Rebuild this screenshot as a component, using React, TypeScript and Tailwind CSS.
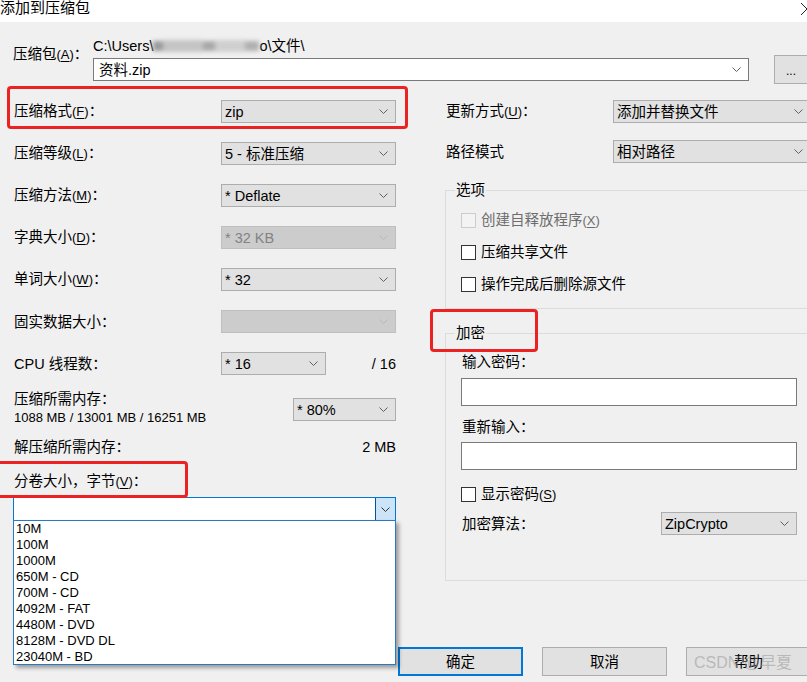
import React from 'react';
import clsx from 'clsx';

// small down-arrow used by every combo box
const Chevron = ({ muted, dark }: { muted?: boolean; dark?: boolean }) => (
  <svg width="9" height="5" viewBox="0 0 9 5" className="shrink-0">
    <polyline
      points="0.5,0.5 4.5,4.5 8.5,0.5"
      fill="none"
      stroke={muted ? '#b8b8b8' : dark ? '#333' : '#606060'}
      strokeWidth="1"
    />
  </svg>
);

interface SelectProps {
  value?: string;
  width: string;
  disabled?: boolean;
}

const Select: React.FC<SelectProps> = ({ value, width, disabled }) => (
  <div
    className={clsx(
      'flex h-[23px] shrink-0 items-center justify-between border pl-[3px] pr-[7px]',
      disabled ? 'border-[#bfbfbf] bg-[#cccccc] text-[#838383]' : 'border-[#adadad] bg-[#e1e1e1] text-black',
      width
    )}
  >
    <span className="truncate">{value}</span>
    <Chevron muted={disabled} />
  </div>
);

// label with an access key, e.g. 压缩格式(F)：
const Acc = ({ text, k }: { text: string; k: string }) => (
  <>
    {text}
    <span className="text-[13px]">
      (<u className="underline-offset-2">{k}</u>)
    </span>
    ：
  </>
);

const Check = ({ label, disabled }: { label: React.ReactNode; disabled?: boolean }) => (
  <div className={clsx('flex h-[18px] items-center gap-[5px]', disabled ? 'text-[#6d6d6d]' : 'text-black')}>
    <span
      className={clsx(
        'h-[15px] w-[15px] shrink-0 border',
        disabled ? 'border-[#cccccc] bg-[#f3f3f3]' : 'border-[#333333] bg-white'
      )}
    />
    <span>{label}</span>
  </div>
);

const LeftRow = ({ label, children, first }: { label: React.ReactNode; children: React.ReactNode; first?: boolean }) => (
  <div className={clsx('flex h-[23px] items-center', !first && 'mt-[19px]')}>
    <div className="w-[208px] shrink-0 pl-[1px]">{label}</div>
    {children}
  </div>
);

const volumeSizes = [
  '10M',
  '100M',
  '1000M',
  '650M - CD',
  '700M - CD',
  '4092M - FAT',
  '4480M - DVD',
  '8128M - DVD DL',
  '23040M - BD',
];

export default function App() {
  return (
    <div className="relative h-[682px] w-[807px] overflow-hidden bg-[#f0f0f0] font-['Liberation_Sans','Noto_Sans_CJK_SC',sans-serif] text-[14.5px] leading-[18px] text-black">
      {/* title bar */}
      <div className="flex h-[22px] items-start justify-between bg-white">
        <span className="text-[15px] leading-[16px]">添加到压缩包</span>
        <svg width="14" height="14" viewBox="0 0 14 14" className="-mr-[7px] mt-[2px]">
          <path d="M1 1 L13 13 M13 1 L1 13" stroke="#222" strokeWidth="1" fill="none" />
        </svg>
      </div>

      {/* archive path */}
      <div className="flex h-[78px] pl-[13px]">
        <div className="w-[80px] shrink-0 pt-[23px]">
          <Acc text="压缩包" k="A" />
        </div>
        <div className="w-[656px] shrink-0 pt-[16px]">
          <div className="flex h-[16px] items-center leading-[16px]">
            <span>C:\Users\</span>
            <span className="flex h-[14px] w-[106px] items-center blur-[2px]">
              <span className="h-[10px] w-[10px] bg-[#9a9a9a]" />
              <span className="h-[12px] w-[40px] bg-[#c4c4c4]" />
              <span className="h-[10px] w-[12px] bg-[#a8a8a8]" />
              <span className="h-[12px] w-[30px] bg-[#cfcfcf]" />
              <span className="h-[10px] w-[14px] bg-[#b0b0b0]" />
            </span>
            <span>o\文件\</span>
          </div>
          <div className="mt-[4px] flex h-[23px] items-center justify-between border border-[#7a7a7a] bg-white pl-[5px] pr-[7px]">
            <span>资料.zip</span>
            <Chevron />
          </div>
        </div>
        <div className="ml-[25px] mt-[33px] flex h-[29px] w-[38px] shrink-0 items-end justify-center border border-[#adadad] bg-[#e1e1e1] pb-[6px] pr-[4px] text-[12px] leading-[12px]">
          ...
        </div>
      </div>

      {/* main two columns */}
      <div className="flex items-start">
        {/* left column */}
        <div className="ml-[13px] flex w-[383px] shrink-0 flex-col">
          <LeftRow first label={<Acc text="压缩格式" k="F" />}>
            <Select value="zip" width="w-[175px]" />
          </LeftRow>
          <LeftRow label={<Acc text="压缩等级" k="L" />}>
            <Select value="5 - 标准压缩" width="w-[175px]" />
          </LeftRow>
          <LeftRow label={<Acc text="压缩方法" k="M" />}>
            <Select value="*  Deflate" width="w-[175px]" />
          </LeftRow>
          <LeftRow label={<Acc text="字典大小" k="D" />}>
            <Select value="*  32 KB" width="w-[175px]" disabled />
          </LeftRow>
          <LeftRow label={<Acc text="单词大小" k="W" />}>
            <Select value="*  32" width="w-[175px]" />
          </LeftRow>
          <LeftRow label="固实数据大小：">
            <Select width="w-[175px]" disabled />
          </LeftRow>
          <LeftRow label="CPU 线程数：">
            <Select value="*  16" width="w-[105px]" />
            <span className="flex-1 text-right">/ 16</span>
          </LeftRow>

          <div className="mt-[15px] flex items-start justify-between">
            <div className="pl-[1px]">
              <div>压缩所需内存：</div>
              <div className="mt-[1px] text-[13px]">1088 MB / 13001 MB / 16251 MB</div>
            </div>
            <div className="mt-[8px]">
              <Select value="* 80%" width="w-[103px]" />
            </div>
          </div>

          <div className="mt-[11px] flex justify-between pl-[1px]">
            <span>解压缩所需内存：</span>
            <span>2 MB</span>
          </div>

          <div className="mt-[16px] pl-[1px]">
            分卷大小，字节<span className="text-[13px]">(<u className="underline-offset-2">V</u>)</span>：
          </div>

          <div className="relative mt-[6px] flex h-[24px] border border-[#0078d7] bg-white">
            <div className="flex-1" />
            <div className="flex w-[20px] items-center justify-center border-l border-[#005499] bg-[#cce4f7]">
              <Chevron dark />
            </div>
            {/* open drop-down list */}
            <div className="absolute left-[-1px] top-full z-10 flex h-[145px] w-[383px] flex-col border border-[#2b79c2] bg-white pl-[2px] text-[13px] leading-[16px] shadow-[3px_3px_4px_rgba(0,0,0,0.35)]">
              {volumeSizes.map((s) => (
                <div key={s} className="h-[16px]">
                  {s}
                </div>
              ))}
            </div>
          </div>
        </div>

        {/* right column */}
        <div className="ml-[49px] w-[362px] shrink-0">
          <div className="flex h-[23px] items-center">
            <div className="w-[168px] shrink-0 pl-[1px]">
              <Acc text="更新方式" k="U" />
            </div>
            <Select value="添加并替换文件" width="w-[198px]" />
          </div>
          <div className="mt-[17px] flex h-[23px] items-center">
            <div className="w-[168px] shrink-0 pl-[1px]">路径模式</div>
            <Select value="相对路径" width="w-[198px]" />
          </div>

          <fieldset className="mt-[18px] w-[372px] border border-[#dcdcdc] pb-[15px] pl-[9px]">
            <legend className="px-[1px] leading-[18px]">选项</legend>
            <div className="ml-[6px] mt-[12px] flex flex-col gap-[14px]">
              <Check
                disabled
                label={
                  <>
                    创建自释放程序<span className="text-[13px]">(<u className="underline-offset-2">X</u>)</span>
                  </>
                }
              />
              <Check label="压缩共享文件" />
              <Check label="操作完成后删除源文件" />
            </div>
          </fieldset>

          <fieldset className="mt-[15px] w-[372px] border border-[#dcdcdc] pb-[45px] pl-[9px]">
            <legend className="px-[1px] leading-[18px]">加密</legend>
            <div className="ml-[6px] flex w-[336px] flex-col">
              <div className="mt-[11px] pl-[1px]">输入密码：</div>
              <div className="mt-[7px] h-[28px] w-[336px] border border-[#7a7a7a] bg-white" />
              <div className="mt-[12px] pl-[1px]">重新输入：</div>
              <div className="mt-[6px] h-[28px] w-[336px] border border-[#7a7a7a] bg-white" />
              <div className="mt-[15px]">
                <Check
                  label={
                    <>
                      显示密码<span className="text-[13px]">(<u className="underline-offset-2">S</u>)</span>
                    </>
                  }
                />
              </div>
              <div className="mt-[9px] flex h-[23px] items-center justify-between">
                <span className="pl-[1px]">加密算法：</span>
                <Select value="ZipCrypto" width="w-[136px]" />
              </div>
            </div>
          </fieldset>
        </div>
      </div>

      {/* dialog buttons */}
      <div className="mt-[66px] flex gap-[19px] pl-[398px]">
        <div className="flex h-[29px] w-[125px] shrink-0 items-center justify-center border-2 border-[#0078d7] bg-[#e1e1e1]">
          确定
        </div>
        <div className="flex h-[29px] w-[125px] shrink-0 items-center justify-center border border-[#adadad] bg-[#e1e1e1]">
          取消
        </div>
        <div className="flex h-[29px] w-[125px] shrink-0 items-center justify-center border border-[#adadad] bg-[#e1e1e1]">
          帮助
        </div>
      </div>

      {/* watermark */}
      <div className="pointer-events-none absolute left-[694px] top-[652px] text-[16px] leading-[22px] text-[rgba(150,150,150,0.55)]">
        CSDN @早夏一
      </div>

      {/* red annotation boxes */}
      <div className="pointer-events-none absolute left-[7px] top-[86px] h-[43px] w-[401px] rounded-[4px] border-[3px] border-[#ec2222]" />
      <div className="pointer-events-none absolute left-[430px] top-[309px] h-[43px] w-[108px] rounded-[4px] border-[3px] border-[#ec2222]" />
      <div className="pointer-events-none absolute left-[-4px] top-[461px] h-[37px] w-[192px] rounded-[4px] border-[3px] border-[#ec2222]" />
    </div>
  );
}
